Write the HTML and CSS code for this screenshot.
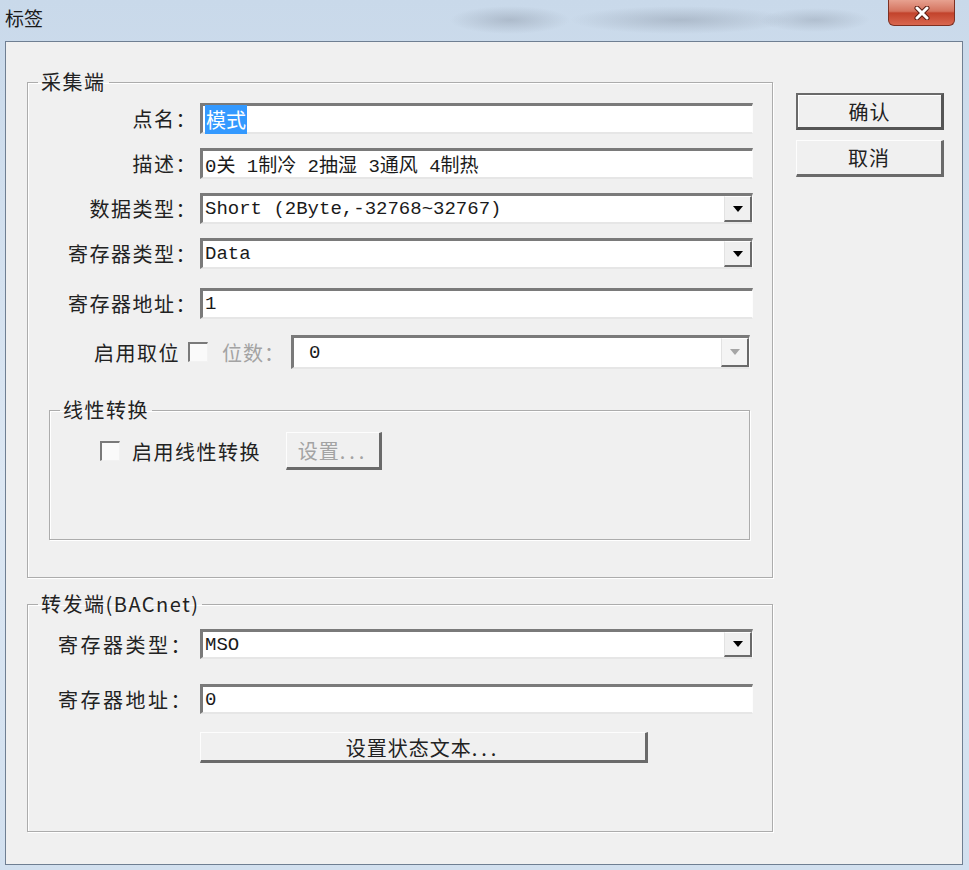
FILE: index.html
```html
<!DOCTYPE html>
<html lang="zh-CN">
<head>
  <meta charset="UTF-8">
  <title>标签</title>
  <link rel="stylesheet" href="styles.css">
</head>
<body>
  <div class="window">
    <div class="titlebar">
      <span class="title">标签</span>
      <span class="close">
        <svg width="18" height="14" viewBox="0 0 18 14">
          <path d="M4 2 L14 12 M14 2 L4 12" stroke="#5a1d12" stroke-width="5" stroke-linecap="round"/>
          <path d="M4 2 L14 12 M14 2 L4 12" stroke="#ffffff" stroke-width="3" stroke-linecap="round"/>
        </svg>
      </span>
    </div>

    <div class="client">
      <div class="main">
        <fieldset class="group collect">
          <legend>采集端</legend>

          <div class="row">
            <span class="lbl">点名：</span>
            <div class="field edit"><span class="val"><span class="sel">模式</span></span></div>
          </div>
          <div class="row">
            <span class="lbl">描述：</span>
            <div class="field edit"><span class="val">0关 1制冷 2抽湿 3通风 4制热</span></div>
          </div>
          <div class="row">
            <span class="lbl">数据类型：</span>
            <div class="field combo">
              <span class="val">Short (2Byte,-32768~32767)</span>
              <span class="drop"><i class="arrow"></i></span>
            </div>
          </div>
          <div class="row">
            <span class="lbl">寄存器类型：</span>
            <div class="field combo">
              <span class="val">Data</span>
              <span class="drop"><i class="arrow"></i></span>
            </div>
          </div>
          <div class="row row-gap">
            <span class="lbl">寄存器地址：</span>
            <div class="field edit"><span class="val">1</span></div>
          </div>

          <div class="bitrow">
            <span class="bit-lbl">启用取位</span>
            <span class="check"></span>
            <span class="bit-count">位数：</span>
            <div class="field combo disabled">
              <span class="val">0</span>
              <span class="drop"><i class="arrow"></i></span>
            </div>
          </div>

          <fieldset class="group sub">
            <legend>线性转换</legend>
            <div class="linrow">
              <span class="check"></span>
              <span class="lin-lbl">启用线性转换</span>
              <button class="btn dim">设置<span class="dots">...</span></button>
            </div>
          </fieldset>
        </fieldset>

        <fieldset class="group forward">
          <legend>转发端(BACnet)</legend>
          <div class="row row-left">
            <span class="lbl">寄存器类型：</span>
            <div class="field combo">
              <span class="val">MSO</span>
              <span class="drop"><i class="arrow"></i></span>
            </div>
          </div>
          <div class="row row-left">
            <span class="lbl">寄存器地址：</span>
            <div class="field edit"><span class="val">0</span></div>
          </div>
          <button class="btn state">设置状态文本<span class="dots">...</span></button>
        </fieldset>
      </div>

      <div class="actions">
        <button class="btn default">确认</button>
        <button class="btn">取消</button>
      </div>
    </div>
  </div>
</body>
</html>
```

FILE: styles.css
```css
* {
  box-sizing: border-box;
}
body {
  margin: 0;
  font-family: "Noto Sans CJK SC", sans-serif;
  color: #222;
}
.window {
  width: 969px;
  height: 870px;
  display: flex;
  flex-direction: column;
  background:
    radial-gradient(ellipse 60px 14px at 510px 20px, rgba(120,130,145,0.35), transparent),
    radial-gradient(ellipse 110px 14px at 680px 20px, rgba(120,130,145,0.35), transparent),
    radial-gradient(ellipse 55px 12px at 815px 20px, rgba(120,130,145,0.3), transparent),
    linear-gradient(180deg, #c9d9ea 0%, #dce7f3 55%, #d2e0ef 100%);
}

/* title bar */
.titlebar {
  height: 41px;
  display: flex;
  align-items: flex-start;
}
.title {
  padding: 6px 0 0 5px;
  font-size: 19px;
  line-height: 24px;
  color: #1b1b1b;
}
.close {
  margin-left: auto;
  margin-right: 14px;
  width: 67px;
  height: 26px;
  display: flex;
  align-items: center;
  justify-content: center;
  border: 1px solid #7d3022;
  border-top: none;
  border-radius: 0 0 6px 6px;
  background: linear-gradient(180deg, #e7a190 0%, #d4735e 45%, #c2432c 52%, #d9674f 100%);
}

/* dialog body */
.client {
  height: 824px;
  margin: 0 6px 0 5px;
  padding: 28px 0 0 21px;
  display: flex;
  border: 1px solid #6f7f92;
  background: #f0f0f0;
}
.main {
  width: 746px;
  display: flex;
  flex-direction: column;
}
.actions {
  width: 148px;
  margin-left: 23px;
  padding-top: 23px;
  display: flex;
  flex-direction: column;
  gap: 10px;
}

/* group boxes */
.group {
  margin: 0;
  padding: 0;
  min-width: 0;
  border: 1px solid #acacac;
  box-shadow: inset 1px 1px 0 #fff, 1px 1px 0 #fff;
}
.group legend {
  margin-left: 10px;
  padding: 0 3px;
  font-size: 20px;
  line-height: 24px;
  letter-spacing: 1.5px;
}
.collect {
  padding: 9px 19px 37px 0;
}
.forward {
  margin-top: 14px;
  padding: 13px 19px 68px 0;
}
.sub {
  margin: 29px 3px 0 21px;
  padding: 10px 0 69px 0;
}

/* form rows */
.row {
  display: grid;
  grid-template-columns: 169px 1fr;
  column-gap: 3px;
  align-items: center;
  margin-bottom: 14px;
}
.row-gap {
  margin-top: 19px;
  margin-bottom: 0;
}
.lbl {
  text-align: right;
  font-size: 20px;
  letter-spacing: 1.5px;
  white-space: nowrap;
}
.row-left {
  grid-template-columns: 172px 1fr;
  column-gap: 0;
  margin-bottom: 25px;
}
.row-left .lbl {
  text-align: left;
  padding-left: 30px;
  letter-spacing: 2.5px;
}
.row-left + .row-left {
  margin-bottom: 18px;
}

/* edit and combo boxes */
.field {
  height: 31px;
  display: flex;
  align-items: center;
  background: #fff;
  border-style: solid;
  border-width: 3px 1px 2px 3px;
  border-color: #7a7a7a #fdfdfd #e6e6e6 #7a7a7a;
}
.row-left .field {
  height: 30px;
}
.val {
  flex: 1;
  padding-left: 2px;
  font-family: "Liberation Mono", "Noto Sans CJK SC", monospace;
  font-size: 19px;
  white-space: nowrap;
  color: #1a1a1a;
}
.sel {
  background: #3399ff;
  color: #fff;
  font-family: "Noto Sans CJK SC", sans-serif;
  font-size: 20px;
  padding: 0 1px;
}
.drop {
  width: 28px;
  align-self: stretch;
  display: flex;
  align-items: center;
  justify-content: center;
  background: #f0f0f0;
  border-style: solid;
  border-width: 1px 2px 2px 1px;
  border-color: #fff #6a6a6a #6a6a6a #e2e2e2;
}
.arrow {
  width: 0;
  height: 0;
  border-left: 5px solid transparent;
  border-right: 5px solid transparent;
  border-top: 6px solid #000;
}

/* bit row */
.bitrow {
  display: flex;
  align-items: center;
  margin-top: 16px;
  margin-right: 3px;
}
.bit-lbl {
  width: 152px;
  text-align: right;
  font-size: 20px;
  letter-spacing: 1.5px;
  white-space: nowrap;
}
.bitrow .check {
  margin-left: 8px;
}
.bit-count {
  margin-left: 14px;
  font-size: 20px;
  letter-spacing: 1px;
  white-space: nowrap;
  color: #a3a3a3;
}
.disabled {
  flex: 1;
  height: 34px;
  margin-left: 6px;
}
.disabled .val {
  padding-left: 15px;
}
.disabled .arrow {
  border-top-color: #a6a6a6;
}
.disabled .drop {
  background: #f4f4f4;
}

.check {
  width: 20px;
  height: 20px;
  flex: none;
  background: #fafafa;
  border-style: solid;
  border-width: 2px 1px 1px 2px;
  border-color: #7a7a7a #f2f2f2 #f2f2f2 #7a7a7a;
}
.linrow {
  display: flex;
  align-items: center;
  padding-left: 50px;
}
.lin-lbl {
  margin-left: 12px;
  font-size: 20px;
  letter-spacing: 1.5px;
}

/* buttons */
.btn {
  font-family: "Noto Sans CJK SC", sans-serif;
  font-size: 20px;
  letter-spacing: 1px;
  color: #222;
  background: #f0f0f0;
  padding: 0;
  border-style: solid;
  border-width: 1px 3px 3px 1px;
  border-color: #fdfdfd #6a6a6a #6a6a6a #fdfdfd;
  height: 37px;
}
.dots {
  letter-spacing: 4px;
}
.btn.default {
  border-width: 2px 3px 3px 2px;
  border-color: #6a6a6a #555 #555 #6a6a6a;
  box-shadow: inset 1px 1px 0 #fff;
}
.btn.dim {
  margin-left: 25px;
  width: 96px;
  height: 38px;
  color: #a3a3a3;
}
.btn.state {
  margin-left: 172px;
  width: 448px;
  height: 31px;
}
```
